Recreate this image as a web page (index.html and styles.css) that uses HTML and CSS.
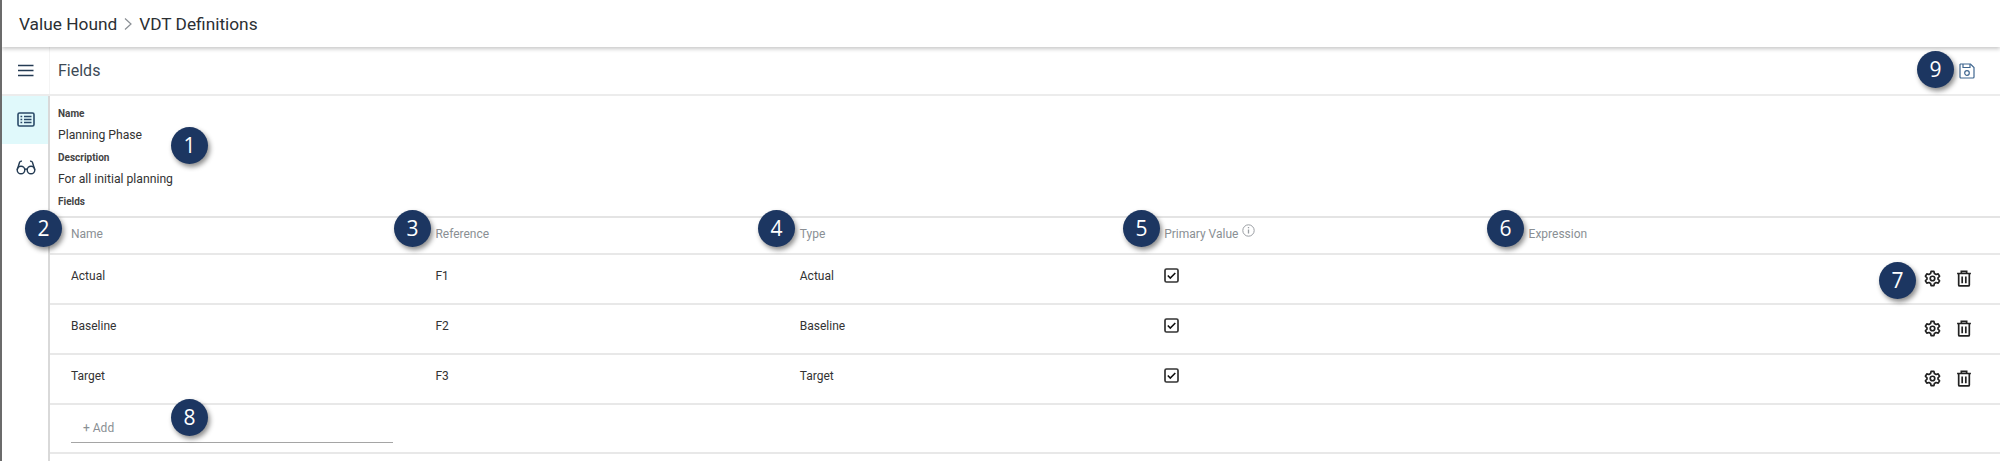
FILE: index.html
```html
<!DOCTYPE html>
<html lang="en">
<head>
  <meta charset="UTF-8">
  <title>VDT Definitions</title>
  <link rel="stylesheet" href="styles.css">
</head>
<body>
  <div class="app">
    <header class="topbar">
      <span>Value Hound</span>
      <svg class="crumb-sep" width="10" height="14" viewBox="0 0 10 14"><path d="M2 1.500 8 7l-6 5.500" fill="none" stroke="#8a8f94" stroke-width="1.200"/></svg>
      <span>VDT Definitions</span>
    </header>

    <div class="toolbar">
      <div class="menu-cell">
        <svg width="16" height="13" viewBox="0 0 16 13"><path d="M0 1.500h15.500M0 6.500h15.500M0 11.500h15.500" stroke="#243b53" stroke-width="1.700"/></svg>
      </div>
      <div class="toolbar-title">Fields</div>
      <svg class="save-icon" width="16" height="16" viewBox="0 0 16 16" fill="none" stroke="#3f668f" stroke-width="1.200">
        <path d="M1.500 1h10L15 4.500V14a1 1 0 0 1-1 1H2a1 1 0 0 1-1-1V1.500z"/>
        <path d="M4 1v3.500h7V1"/>
        <circle cx="8" cy="10" r="2.300"/>
      </svg>
    </div>

    <div class="main">
      <nav class="side">
        <div class="side-item active">
          <svg width="18" height="15" viewBox="0 0 18 15" fill="none" stroke="#2a4a68" stroke-width="1.600">
            <rect x="1" y="1" width="16" height="13" rx="1.500"/>
            <path d="M7 4.500h7.500M7 7.500h7.500M7 10.500h7.500M3.500 4.500h1.700M3.500 7.500h1.700M3.500 10.500h1.700"/>
          </svg>
        </div>
        <div class="side-item">
          <svg width="20" height="15" viewBox="0 0 20 15" fill="none" stroke="#243b53" stroke-width="1.400">
            <circle cx="5" cy="10" r="3.800"/>
            <circle cx="15" cy="10" r="3.800"/>
            <path d="M8.800 9.500c.7-.6 1.700-.6 2.400 0M1.200 10 3.500 2.500c.3-1 1.200-1.500 2.500-1.300M18.800 10 16.500 2.500c-.3-1-1.200-1.500-2.500-1.300"/>
          </svg>
        </div>
      </nav>

      <section class="content">
        <div class="form">
          <div class="form-label">Name</div>
          <div class="form-value">Planning Phase</div>
          <div class="form-label">Description</div>
          <div class="form-value">For all initial planning</div>
          <div class="form-label">Fields</div>
        </div>

        <div class="grid-row grid-head">
          <div>Name</div>
          <div>Reference</div>
          <div>Type</div>
          <div class="primary-head">Primary Value
            <svg class="info-icon" width="13" height="13" viewBox="0 0 13 13" fill="none" stroke="#9a9ea3"><circle cx="6.500" cy="6.500" r="5.700"/><path d="M6.500 5.500v4M6.500 3v1.300" stroke-width="1.300"/></svg>
          </div>
          <div>Expression</div>
        </div>

        <div class="grid-row">
          <div>Actual</div>
          <div>F1</div>
          <div>Actual</div>
          <div><svg class="check" width="15" height="15" viewBox="0 0 15 15"><rect x="1" y="1" width="13" height="13" rx="1.500" fill="none" stroke="#333" stroke-width="1.700"/><path d="M3.800 7.500 6.300 10l5-5" fill="none" stroke="#111" stroke-width="1.600"/></svg></div>
          <div></div>
          <div class="actions">
            <svg width="17" height="17" viewBox="0 0 24 24" fill="none" stroke="#222" stroke-width="2.400"><use href="#gear"/></svg>
            <svg width="16" height="17" viewBox="0 0 15 16" fill="none" stroke="#222" stroke-width="1.600"><use href="#bin"/></svg>
          </div>
        </div>
        <div class="grid-row">
          <div>Baseline</div>
          <div>F2</div>
          <div>Baseline</div>
          <div><svg class="check" width="15" height="15" viewBox="0 0 15 15"><rect x="1" y="1" width="13" height="13" rx="1.500" fill="none" stroke="#333" stroke-width="1.700"/><path d="M3.800 7.500 6.300 10l5-5" fill="none" stroke="#111" stroke-width="1.600"/></svg></div>
          <div></div>
          <div class="actions">
            <svg width="17" height="17" viewBox="0 0 24 24" fill="none" stroke="#222" stroke-width="2.400"><use href="#gear"/></svg>
            <svg width="16" height="17" viewBox="0 0 15 16" fill="none" stroke="#222" stroke-width="1.600"><use href="#bin"/></svg>
          </div>
        </div>
        <div class="grid-row">
          <div>Target</div>
          <div>F3</div>
          <div>Target</div>
          <div><svg class="check" width="15" height="15" viewBox="0 0 15 15"><rect x="1" y="1" width="13" height="13" rx="1.500" fill="none" stroke="#333" stroke-width="1.700"/><path d="M3.800 7.500 6.300 10l5-5" fill="none" stroke="#111" stroke-width="1.600"/></svg></div>
          <div></div>
          <div class="actions">
            <svg width="17" height="17" viewBox="0 0 24 24" fill="none" stroke="#222" stroke-width="2.400"><use href="#gear"/></svg>
            <svg width="16" height="17" viewBox="0 0 15 16" fill="none" stroke="#222" stroke-width="1.600"><use href="#bin"/></svg>
          </div>
        </div>

        <div class="add-row">
          <div class="add-input">+ Add</div>
        </div>
      </section>
    </div>

    <span class="badge b1">1</span>
    <span class="badge b2">2</span>
    <span class="badge b3">3</span>
    <span class="badge b4">4</span>
    <span class="badge b5">5</span>
    <span class="badge b6">6</span>
    <span class="badge b7">7</span>
    <span class="badge b8">8</span>
    <span class="badge b9">9</span>
  </div>

  <svg width="0" height="0" class="defs">
    <defs>
      <g id="gear">
        <circle cx="12" cy="12" r="3.200"/>
        <path d="M10 2h4l.7 3 2.300 1.300 3-.9 2 3.400-2.200 2.200v2l2.200 2.200-2 3.400-3-.9L14.700 19l-.7 3h-4l-.7-3L7 17.700l-3 .9-2-3.400L4.200 13v-2L2 8.800l2-3.400 3 .9L9.300 5z" stroke-linejoin="round"/>
      </g>
      <g id="bin">
        <path d="M1 3.300h13M5 3V1.200h5V3M2.500 3.500V14a1 1 0 0 0 1 1h8a1 1 0 0 0 1-1V3.500M5.800 6v6.500M9.200 6v6.500"/>
      </g>
    </defs>
  </svg>
</body>
</html>
```

FILE: styles.css
```css
* {
  box-sizing: border-box;
}

body {
  margin: 0;
  background: #fff;
  font-family: Roboto, sans-serif;
  color: #333;
}

.app {
  position: relative;
  width: 2000px;
  height: 461px;
  overflow: hidden;
  border-left: 2px solid #6b6b6b;
}

.defs {
  position: absolute;
}

.topbar {
  height: 47px;
  display: flex;
  align-items: center;
  gap: 6px;
  padding-left: 17px;
  font-size: 17.300px;
  color: #2b2f33;
  box-shadow: 0 2px 4px rgba(0, 0, 0, 0.22);
  position: relative;
}

.toolbar {
  height: 49px;
  display: flex;
  align-items: center;
  border-bottom: 2px solid #ececec;
  padding-right: 25px;
}

.menu-cell {
  width: 48px;
  height: 100%;
  display: flex;
  align-items: center;
  justify-content: center;
  border-right: 1px solid #f4f4f4;
}

.toolbar-title {
  flex: 1;
  padding-left: 8px;
  font-size: 16px;
  color: #3d4a56;
}

.main {
  display: flex;
  height: 365px;
}

.side {
  width: 48px;
  border-right: 2px solid #d9d9d9;
  flex: none;
}

.side-item {
  height: 48px;
  display: flex;
  align-items: center;
  justify-content: center;
  padding: 0 0 2px 2px;
}

.side-item.active {
  background: #e0f9fb;
}

.content {
  flex: 1;
  min-width: 0;
}

.form {
  padding: 11px 8px 0;
  height: 122px;
  border-bottom: 2px solid #e4e4e4;
  color: #333;
}

.form-label {
  font-size: 10px;
  font-weight: 700;
  line-height: 14px;
  color: #444;
}

.form-value {
  font-size: 12.200px;
  line-height: 14px;
  margin: 7px 0 9px;
}

.grid-row {
  display: grid;
  grid-template-columns: 364.400px 364.400px 364.400px 364.400px 1fr 100px;
  align-items: start;
  height: 50px;
  border-bottom: 2px solid #e8e8e8;
  font-size: 12px;
  line-height: 14px;
  padding-top: 14px;
  color: #333;
}

.grid-row > div {
  padding-left: 21px;
}

.grid-head {
  height: 37px;
  padding-top: 9px;
  color: #8a8f94;
  grid-template-columns: 364.400px 364.400px 364.400px 364.400px 1fr;
}

.primary-head {
  display: flex;
  align-items: flex-start;
  gap: 4px;
}

.info-icon {
  margin-top: -3px;
}

.check {
  display: block;
  margin: -1px 0 0;
}

.grid-row > .actions {
  display: flex;
  gap: 15px;
  padding: 1px 28px 0 0;
  justify-content: flex-end;
}

.add-row {
  height: 49px;
  padding: 9px 0 0 21px;
  border-bottom: 2px solid #e8e8e8;
}

.add-input {
  width: 322px;
  height: 29px;
  padding: 7px 0 0 12px;
  font-size: 12px;
  line-height: 14px;
  color: #8a8f94;
  border-bottom: 1px solid #a5a5a5;
}

.badge {
  position: absolute;
  width: 37px;
  height: 37px;
  border-radius: 50%;
  background: #1c3661;
  color: #fff;
  font-family: "Open Sans", sans-serif;
  font-size: 21px;
  line-height: 37px;
  text-align: center;
  box-shadow: 2px 3px 5px rgba(0, 0, 0, 0.45);
}

.b1 { left: 169px; top: 127px; }
.b2 { left: 23px; top: 210px; }
.b3 { left: 392px; top: 210px; }
.b4 { left: 756px; top: 210px; }
.b5 { left: 1121px; top: 210px; }
.b6 { left: 1485px; top: 210px; }
.b7 { left: 1877px; top: 262px; }
.b8 { left: 169px; top: 399px; }
.b9 { left: 1915px; top: 51px; }
```
